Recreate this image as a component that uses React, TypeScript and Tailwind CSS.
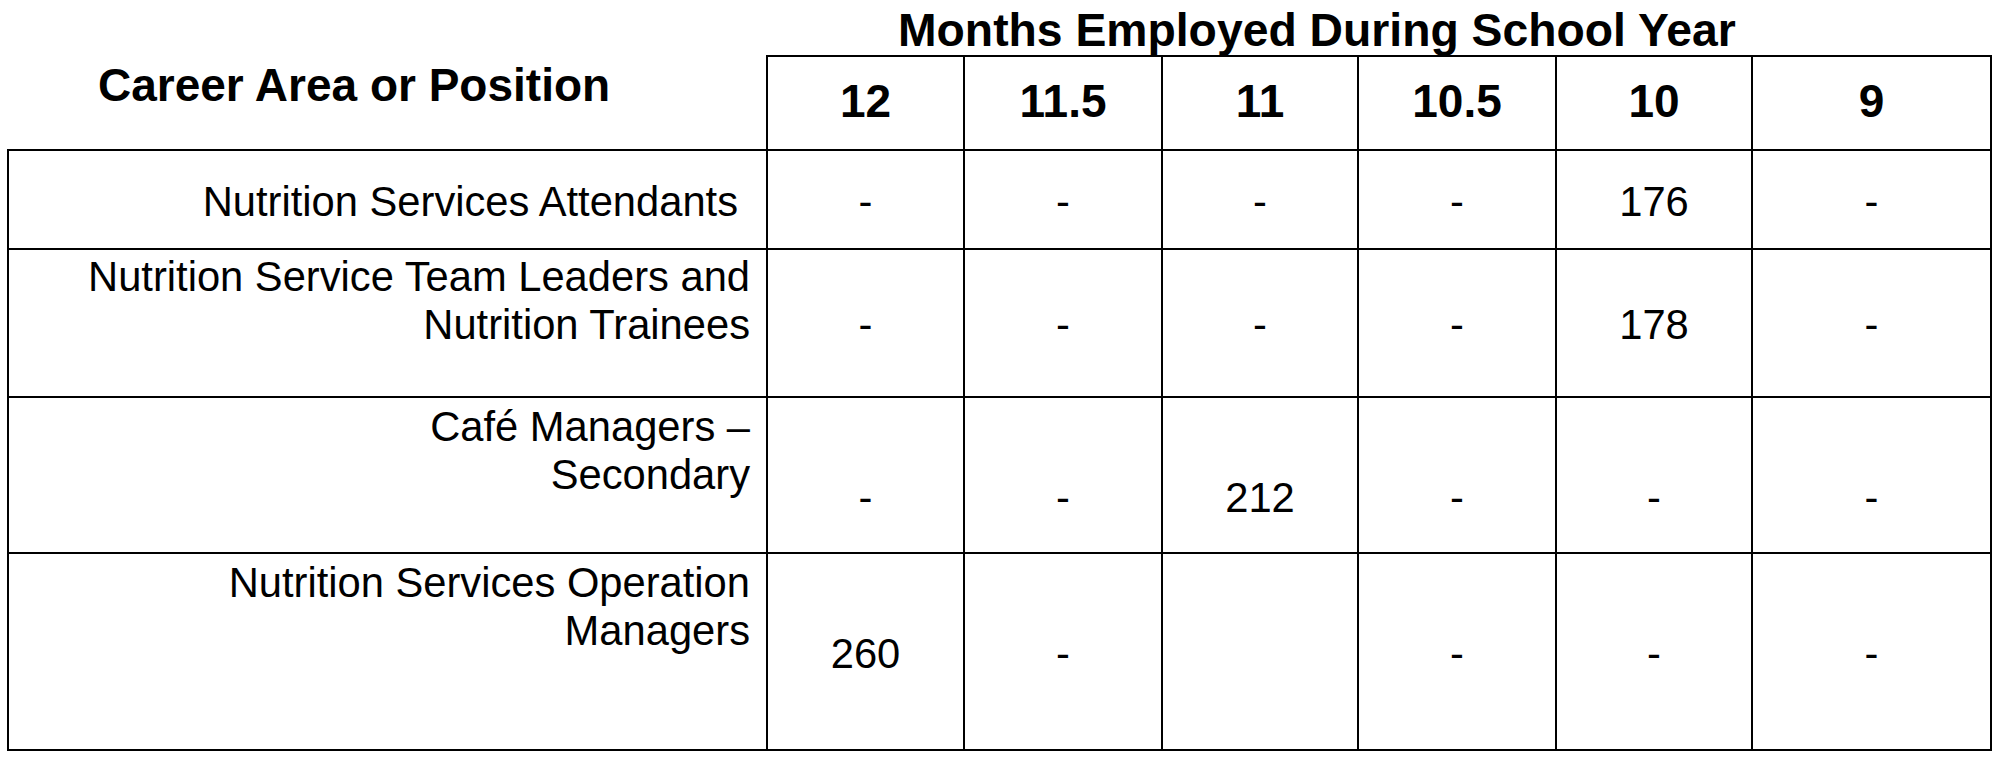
const months = ["12", "11.5", "11", "10.5", "10", "9"];

type Row = {
  label: React.ReactNode;
  values: string[];
  labelPad: string;
  valuePad: string;
  labelRight?: string;
};

const rows: Row[] = [
  {
    label: "Nutrition Services Attendants",
    values: ["-", "-", "-", "-", "176", "-"],
    labelPad: "pt-[27px]",
    valuePad: "pt-[27px]",
    labelRight: "pr-[28px]",
  },
  {
    label: (
      <>
        Nutrition Service Team Leaders and
        <br />
        Nutrition Trainees
      </>
    ),
    values: ["-", "-", "-", "-", "178", "-"],
    labelPad: "pt-[3px]",
    valuePad: "pt-[51px]",
  },
  {
    label: (
      <>
        Café Managers –
        <br />
        Secondary
      </>
    ),
    values: ["-", "-", "212", "-", "-", "-"],
    labelPad: "pt-[5px]",
    valuePad: "pt-[76px]",
  },
  {
    label: (
      <>
        Nutrition Services Operation
        <br />
        Managers
      </>
    ),
    values: ["260", "-", "", "-", "-", "-"],
    labelPad: "pt-[5px]",
    valuePad: "pt-[76px]",
  },
];

export default function App() {
  return (
    <div className="w-[2000px] h-[760px] bg-white pl-[7px] text-black font-['Liberation_Sans',Arial,sans-serif]">
      <div className="grid grid-cols-[759px_197px_198px_196px_198px_196px_241px] grid-rows-[55px_94px_99px_148px_156px_199px]">
        {/* Header label */}
        <div className="row-span-2 pl-[91px] pt-[59px] text-[46px] leading-[52px] font-bold whitespace-nowrap">
          Career Area or Position
        </div>
        {/* Title over month columns */}
        <div className="col-span-6 pl-[132px] pt-[4px] text-[46.3px] leading-[52px] font-bold whitespace-nowrap">
          Months Employed During School Year
        </div>
        {/* Month headers */}
        {months.map((m, i) => (
          <div
            key={m}
            className={`border-t-2 border-l-2 border-black text-center pt-[18px] text-[46px] leading-[52px] font-bold ${
              i === months.length - 1 ? "border-r-2" : ""
            }`}
          >
            {m}
          </div>
        ))}

        {/* Body rows */}
        {rows.map((row, r) => {
          const last = r === rows.length - 1;
          return (
            <div key={r} className="contents">
              <div
                className={`border-t-2 border-l-2 border-black text-right text-[41.7px] leading-[48px] whitespace-nowrap ${row.labelPad} ${
                  row.labelRight ?? "pr-[16px]"
                } ${last ? "border-b-2" : ""}`}
              >
                {row.label}
              </div>
              {row.values.map((v, c) => (
                <div
                  key={c}
                  className={`border-t-2 border-l-2 border-black text-center text-[41.7px] leading-[48px] ${row.valuePad} ${
                    c === row.values.length - 1 ? "border-r-2" : ""
                  } ${last ? "border-b-2" : ""}`}
                >
                  {v}
                </div>
              ))}
            </div>
          );
        })}
      </div>
    </div>
  );
}
